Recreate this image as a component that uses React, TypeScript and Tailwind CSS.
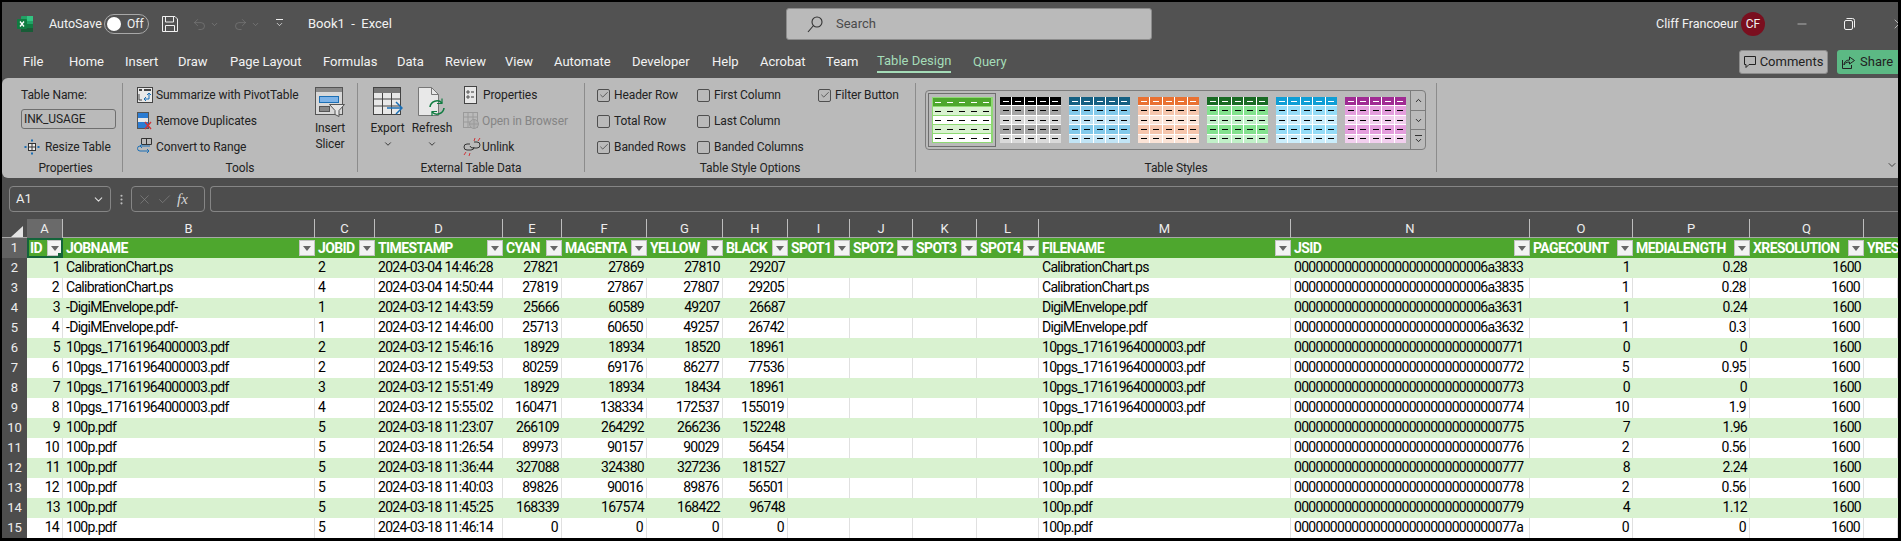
import { ChevronDown, ChevronUp, Minus, X, Check, MoreVertical, Undo2, Redo2 } from "lucide-react";

const gridCols =
  "grid grid-cols-[25px_36px_252px_60px_128px_59px_85px_76px_65px_62px_63px_64px_62px_252px_239px_103px_117px_114px_34px]";

const tabs = [
  { label: "File", cls: "w-[46px]" },
  { label: "Home", cls: "w-[56px]" },
  { label: "Insert", cls: "w-[53px]" },
  { label: "Draw", cls: "w-[52px]" },
  { label: "Page Layout", cls: "w-[93px]" },
  { label: "Formulas", cls: "w-[74px]" },
  { label: "Data", cls: "w-[48px]" },
  { label: "Review", cls: "w-[60px]" },
  { label: "View", cls: "w-[49px]" },
  { label: "Automate", cls: "w-[78px]" },
  { label: "Developer", cls: "w-[80px]" },
  { label: "Help", cls: "w-[48px]" },
  { label: "Acrobat", cls: "w-[66px]" },
  { label: "Team", cls: "w-[51px]" },
];

const headers = [
  "ID", "JOBNAME", "JOBID", "TIMESTAMP", "CYAN", "MAGENTA", "YELLOW", "BLACK", "SPOT1", "SPOT2", "SPOT3", "SPOT4",
  "FILENAME", "JSID", "PAGECOUNT", "MEDIALENGTH", "XRESOLUTION", "YRES",
];
const colLetters = "ABCDEFGHIJKLMNOPQR".split("");

const jsid = (tail: string) => tail.padStart(32, "0");
const calib = "CalibrationChart.ps";
const digi = "-DigiMEnvelope.pdf-";
const digiFile = "DigiMEnvelope.pdf";
const pgs = "10pgs_17161964000003.pdf";
const hundred = "100p.pdf";

const rows: (string | number)[][] = [
  [1, calib, 2, "2024-03-04 14:46:28", 27821, 27869, 27810, 29207, calib, "6a3833", 1, 0.28],
  [2, calib, 4, "2024-03-04 14:50:44", 27819, 27867, 27807, 29205, calib, "6a3835", 1, 0.28],
  [3, digi, 1, "2024-03-12 14:43:59", 25666, 60589, 49207, 26687, digiFile, "6a3631", 1, 0.24],
  [4, digi, 1, "2024-03-12 14:46:00", 25713, 60650, 49257, 26742, digiFile, "6a3632", 1, 0.3],
  [5, pgs, 2, "2024-03-12 15:46:16", 18929, 18934, 18520, 18961, pgs, "771", 0, 0],
  [6, pgs, 2, "2024-03-12 15:49:53", 80259, 69176, 86277, 77536, pgs, "772", 5, 0.95],
  [7, pgs, 3, "2024-03-12 15:51:49", 18929, 18934, 18434, 18961, pgs, "773", 0, 0],
  [8, pgs, 4, "2024-03-12 15:55:02", 160471, 138334, 172537, 155019, pgs, "774", 10, 1.9],
  [9, hundred, 5, "2024-03-18 11:23:07", 266109, 264292, 266236, 152248, hundred, "775", 7, 1.96],
  [10, hundred, 5, "2024-03-18 11:26:54", 89973, 90157, 90029, 56454, hundred, "776", 2, 0.56],
  [11, hundred, 5, "2024-03-18 11:36:44", 327088, 324380, 327236, 181527, hundred, "777", 8, 2.24],
  [12, hundred, 5, "2024-03-18 11:40:03", 89826, 90016, 89876, 56501, hundred, "778", 2, 0.56],
  [13, hundred, 5, "2024-03-18 11:45:25", 168339, 167574, 168422, 96748, hundred, "779", 4, 1.12],
  [14, hundred, 5, "2024-03-18 11:46:14", 0, 0, 0, 0, hundred, "77a", 0, 0],
];

const tableStyles = [
  { head: "bg-[#4ea72e]", band: "bg-[#d9f2d0]", alt: "bg-white", selected: true },
  { head: "bg-black", band: "bg-[#a6a6a6]", alt: "bg-[#d9d9d9]", selected: false },
  { head: "bg-[#156082]", band: "bg-[#83caeb]", alt: "bg-[#c1e4f5]", selected: false },
  { head: "bg-[#e97132]", band: "bg-[#f6c6ad]", alt: "bg-[#fbe3d6]", selected: false },
  { head: "bg-[#196b24]", band: "bg-[#83e28e]", alt: "bg-[#c1f0c8]", selected: false },
  { head: "bg-[#0f9ed5]", band: "bg-[#95dcf7]", alt: "bg-[#caedfb]", selected: false },
  { head: "bg-[#a02b93]", band: "bg-[#e49edd]", alt: "bg-[#f2cfee]", selected: false },
];

function ExcelLogo() {
  return (
    <svg width="16" height="16" viewBox="0 0 16 16">
      <rect x="4" y="0" width="12" height="16" rx="1" fill="#21a366" />
      <rect x="10" y="0" width="6" height="5" fill="#33c481" />
      <rect x="10" y="8" width="6" height="4" fill="#107c41" />
      <rect x="4" y="12" width="12" height="4" fill="#185c37" />
      <rect x="0" y="3" width="10" height="10" rx="1" fill="#107c41" />
      <path d="M3 5.5l4 5M7 5.5l-4 5" stroke="#fff" strokeWidth="1.3" />
    </svg>
  );
}

function SaveIcon() {
  return (
    <svg width="16" height="16" viewBox="0 0 16 16" fill="none" stroke="#f0f0f0" strokeWidth="1">
      <path d="M.5.5h12.5l2.5 2.5v12.5H.5z" />
      <path d="M3.5.5v5.5h8V.5M3.5 15.5v-6h9v6" />
    </svg>
  );
}

function SearchGlass() {
  return (
    <svg width="16" height="17" viewBox="0 0 16 17" fill="none" stroke="#333" strokeWidth="1.1">
      <circle cx="10" cy="6" r="5" />
      <path d="M6.500 9.500L1 16" />
    </svg>
  );
}

function RestoreIcon() {
  return (
    <svg width="11" height="12" viewBox="0 0 11 12" fill="none" stroke="#f0f0f0">
      <rect x=".5" y="2.500" width="8" height="9" rx="1.500" />
      <path d="M2.500.5h6a2 2 0 012 2v7" />
    </svg>
  );
}

function PivotIcon() {
  return (
    <svg width="16" height="16" viewBox="0 0 16 16" fill="none">
      <rect x=".5" y=".5" width="15" height="15" fill="#e8e8e8" stroke="#444" />
      <path d="M2 3h3M7 3h7" stroke="#444" strokeWidth="2" />
      <path d="M2 7v6M2 13h3" stroke="#444" />
      <path d="M12 6v6H7m2-2l-2 2 2 2M10 8l2-2 2 2" stroke="#1b6fb5" />
    </svg>
  );
}

function DuplicatesIcon() {
  return (
    <svg width="16" height="18" viewBox="0 0 16 18" fill="none">
      <rect x=".5" y=".5" width="11" height="16" fill="#e8e8e8" stroke="#555" />
      <rect x="1" y="1" width="10" height="5" fill="#2b7cd3" />
      <rect x="1" y="10" width="10" height="6" fill="#2b7cd3" />
      <path d="M8 10l6 7M14 10l-6 7" stroke="#d13438" strokeWidth="1.4" />
    </svg>
  );
}

function ConvertIcon() {
  return (
    <svg width="16" height="18" viewBox="0 0 16 18" fill="none">
      <path d="M4.5.5h10v6h-10zM9.5.5v6" stroke="#333" />
      <path d="M13 8H3a2.5 2.5 0 000 5h9m-2-2l2 2-2 2M5 6L3 8l2 2" stroke="#1b6fb5" />
    </svg>
  );
}

function ResizeIcon() {
  return (
    <svg width="16" height="16" viewBox="0 0 16 16" fill="none">
      <rect x="4.5" y="4.5" width="7" height="7" fill="#eee" stroke="#333" />
      <path d="M4.5 8h7M8 4.5v7" stroke="#333" />
      <path d="M8 0v3M7 1.5h2M8 13v3M7 14.500h2M0 8h3M1.500 7v2M13 8h3M14.500 7v2" stroke="#1b6fb5" />
    </svg>
  );
}

function SlicerIcon() {
  return (
    <svg width="30" height="30" viewBox="0 0 30 30" fill="none">
      <rect x=".5" y=".5" width="27" height="27" fill="#d8d8d8" stroke="#555" />
      <rect x="1" y="1" width="26" height="4" fill="#8a8a8a" />
      <rect x="4.500" y="9.500" width="19" height="6" fill="#7db3e8" stroke="#1b6fb5" />
      <rect x="4.500" y="19.500" width="10" height="5" fill="#888" stroke="#555" />
      <path d="M14.500 17.500h15l-5.500 6v6l-4-2v-4z" fill="#e4e4e4" stroke="#555" />
    </svg>
  );
}

function ExportIcon() {
  return (
    <svg width="30" height="30" viewBox="0 0 30 30" fill="none">
      <rect x=".5" y=".5" width="27" height="27" fill="#e8e8e8" stroke="#444" />
      <rect x="1" y="1" width="26" height="5" fill="#777" />
      <path d="M1 12h26M1 19h26M9.500 6v21M18.500 6v21" stroke="#444" />
      <path d="M14 21h15m-6-6l6 6-6 6" stroke="#1b6fb5" strokeWidth="1.500" />
    </svg>
  );
}

function RefreshIcon() {
  return (
    <svg width="28" height="30" viewBox="0 0 28 30" fill="none">
      <path d="M.5.5h13l7 7v21H.500z" fill="#e8e8e8" stroke="#777" />
      <path d="M13.500.5v7h7" stroke="#777" />
      <path d="M12 20a7 7 0 0112-4M26 21a7 7 0 01-12 4" stroke="#107c41" strokeWidth="1.600" />
      <path d="M24 11.500v5h-5M14 29v-4.500h5" stroke="#107c41" strokeWidth="1.200" />
    </svg>
  );
}

function DocDotsIcon() {
  return (
    <svg width="13" height="18" viewBox="0 0 13 18" fill="none">
      <rect x=".5" y=".5" width="12" height="17" fill="#e8e8e8" stroke="#444" />
      <path d="M3 5h2v2H3zM3 10h2v2H3z" stroke="#333" strokeWidth=".8" />
      <path d="M7 6h3M7 11h3" stroke="#333" />
    </svg>
  );
}

function BrowserIcon() {
  return (
    <svg width="16" height="18" viewBox="0 0 16 18" fill="none" stroke="#9a9a9a">
      <rect x=".5" y=".5" width="14" height="15" />
      <path d="M.5 5h14M.5 10h14M5 .5v15M10 .5v15" />
      <circle cx="11" cy="12" r="4.500" fill="#b0b0b0" />
      <path d="M6.500 12h9M11 7.500v9" />
    </svg>
  );
}

function UnlinkIcon() {
  return (
    <svg width="18" height="20" viewBox="0 0 18 20" fill="none">
      <path d="M7 7H4a3 3 0 000 6h4a3 3 0 003-3M11 5h3a3 3 0 010 6h-4a3 3 0 01-3-2" stroke="#333" />
      <path d="M11 4l1-3M15 4l2-3M3 15l-2 3M7 16l-1 3" stroke="#d13438" />
    </svg>
  );
}

function FilterButton() {
  return (
    <span className="flex h-[16px] w-[16px] shrink-0 items-center justify-center border border-[#c4c4c4] bg-[#f3f3f3]">
      <svg width="8" height="5" viewBox="0 0 8 5">
        <path d="M0 0h8L4 5z" fill="#666" />
      </svg>
    </span>
  );
}

function CheckBox({ checked = false }: { checked?: boolean }) {
  return (
    <span className="flex h-[13px] w-[13px] shrink-0 items-center justify-center rounded-[2px] border border-[#4f4f4f]">
      {checked && <Check size={10} strokeWidth={1.5} className="text-[#222]" />}
    </span>
  );
}

function OptionRow({ label, checked }: { label: string; checked?: boolean }) {
  return (
    <div className="flex h-6 items-center gap-[4px]">
      <CheckBox checked={checked} />
      <span>{label}</span>
    </div>
  );
}

function StyleThumb({ s }: { s: (typeof tableStyles)[number] }) {
  const rowsCls = [s.head, s.band, s.alt, s.band, s.alt];
  const thumb = (
    <div className={`flex h-[46px] w-[61px] shrink-0 flex-col gap-[1px] ${s.selected ? "border border-[#8ed973] bg-[#8ed973]" : "bg-white"}`}>
      {rowsCls.map((bg, i) => (
        <div key={i} className={`flex flex-1 ${s.selected ? "gap-0" : "gap-[1px]"}`}>
          {[0, 1, 2, 3, 4].map((c) => (
            <div key={c} className={`flex flex-1 items-center justify-center ${bg}`}>
              <span className={`h-[1px] w-[6px] ${i === 0 ? "bg-white" : "bg-black"}`} />
            </div>
          ))}
        </div>
      ))}
    </div>
  );
  if (s.selected) {
    return <div className="flex h-[54px] w-[68px] shrink-0 items-center justify-center border border-[#6e6e6e]">{thumb}</div>;
  }
  return <div className="flex h-[54px] w-[69px] shrink-0 items-center pl-[4px]">{thumb}</div>;
}

function GroupLabel({ children }: { children: string }) {
  return <div className="mt-[2px] h-[14px] text-center leading-[14px] text-[#222]">{children}</div>;
}

function Ribbon() {
  return (
    <div className="flex h-[100px] rounded-l-[6px] bg-[#bababa] pt-[5px] pl-[7px] font-['Roboto',sans-serif] text-[12px] tracking-[-0.1px] text-[#222]">
      <div className="h-[89px] w-[114px] border-r border-[#8c8c8c]">
        <div className="flex h-[76px] flex-col pl-[12px]">
          <div className="flex h-6 items-center">Table Name:</div>
          <div className="mt-[2px] flex h-[20px] w-[95px] items-center rounded-[3px] border border-[#6f6f6f] pl-[2px]">INK_USAGE</div>
          <div className="mt-[7px] flex h-6 items-center gap-[5px] pl-[3px]">
            <ResizeIcon />
            <span>Resize Table</span>
          </div>
        </div>
        <GroupLabel>Properties</GroupLabel>
      </div>

      <div className="h-[89px] w-[235px] border-r border-[#8c8c8c]">
        <div className="flex h-[76px] pl-[14px]">
          <div className="flex w-[171px] flex-col gap-[2px]">
            <div className="flex h-6 items-center gap-[3px]"><PivotIcon /><span>Summarize with PivotTable</span></div>
            <div className="flex h-6 items-center gap-[3px]"><DuplicatesIcon /><span>Remove Duplicates</span></div>
            <div className="flex h-6 items-center gap-[3px]"><ConvertIcon /><span>Convert to Range</span></div>
          </div>
          <div className="flex w-[44px] flex-col items-center pt-[4px] text-center leading-[16px]">
            <SlicerIcon />
            <span className="mt-[3px]">Insert</span>
            <span>Slicer</span>
          </div>
        </div>
        <GroupLabel>Tools</GroupLabel>
      </div>

      <div className="h-[89px] w-[227px] border-r border-[#8c8c8c]">
        <div className="flex h-[76px] pl-[5px]">
          <div className="flex w-[49px] flex-col items-center pt-[4px] leading-[16px]">
            <ExportIcon />
            <span className="mt-[3px]">Export</span>
            <ChevronDown size={10} className="mt-[3px]" />
          </div>
          <div className="flex w-[40px] flex-col items-center pt-[4px] leading-[16px]">
            <RefreshIcon />
            <span className="mt-[3px]">Refresh</span>
            <ChevronDown size={10} className="mt-[3px]" />
          </div>
          <div className="flex flex-col gap-[2px] pl-[11px]">
            <div className="flex h-6 items-center gap-[6px] pl-[1px]"><DocDotsIcon /><span>Properties</span></div>
            <div className="flex h-6 items-center gap-[3px] text-[#858585]"><BrowserIcon /><span>Open in Browser</span></div>
            <div className="flex h-6 items-center gap-[1px]"><UnlinkIcon /><span>Unlink</span></div>
          </div>
        </div>
        <GroupLabel>External Table Data</GroupLabel>
      </div>

      <div className="h-[89px] w-[331px] border-r border-[#8c8c8c]">
        <div className="flex h-[76px] pl-[12px]">
          <div className="flex w-[100px] flex-col gap-[2px]">
            <OptionRow label="Header Row" checked />
            <OptionRow label="Total Row" />
            <OptionRow label="Banded Rows" checked />
          </div>
          <div className="flex w-[121px] flex-col gap-[2px]">
            <OptionRow label="First Column" />
            <OptionRow label="Last Column" />
            <OptionRow label="Banded Columns" />
          </div>
          <div className="flex flex-col">
            <OptionRow label="Filter Button" checked />
          </div>
        </div>
        <GroupLabel>Table Style Options</GroupLabel>
      </div>

      <div className="h-[89px] w-[521px] border-r border-[#8c8c8c]">
        <div className="h-[76px] pt-[7px] pl-[9px]">
          <div className="flex h-[60px] w-[501px] rounded-[4px] border border-[#7c7c7c]">
            <div className="flex flex-1 items-center pl-[2px]">
              {tableStyles.map((s) => (
                <StyleThumb key={s.head} s={s} />
              ))}
            </div>
            <div className="flex w-[15px] flex-col border-l border-[#7c7c7c]">
              <div className="flex flex-1 items-center justify-center border-b border-[#7c7c7c]"><ChevronUp size={9} strokeWidth={2.5} /></div>
              <div className="flex flex-1 items-center justify-center border-b border-[#7c7c7c]"><ChevronDown size={9} strokeWidth={2.5} /></div>
              <div className="flex flex-1 flex-col items-center justify-center">
                <span className="h-[1px] w-[7px] bg-[#333]" />
                <ChevronDown size={9} strokeWidth={2.5} />
              </div>
            </div>
          </div>
        </div>
        <GroupLabel>Table Styles</GroupLabel>
      </div>

      <div className="flex flex-1 items-end justify-end pb-[7px]">
        <ChevronDown size={12} className="text-[#444]" />
      </div>
    </div>
  );
}

function FormulaBar() {
  return (
    <div className="mt-[8px] flex h-[26px] items-stretch pl-[7px] font-['Roboto',sans-serif] text-[13px] text-[#eee]">
      <div className="flex w-[102px] items-center justify-between rounded-[4px] border border-[#858585] pr-[5px] pl-[6px]">
        <span>A1</span>
        <ChevronDown size={13} className="text-[#ddd]" />
      </div>
      <div className="flex w-[20px] items-center justify-center">
        <MoreVertical size={13} className="text-[#bbb]" />
      </div>
      <div className="flex w-[74px] items-center gap-[5px] rounded-[4px] border border-[#858585] pl-[5px]">
        <X size={15} strokeWidth={1} className="text-[#8a8a8a]" />
        <Check size={15} strokeWidth={1} className="text-[#8a8a8a]" />
        <span className="font-['Liberation_Serif',serif] text-[15px] text-[#d5d5d5] italic">fx</span>
      </div>
      <div className="ml-[5px] flex-1 rounded-l-[4px] border-y border-l border-[#858585]" />
    </div>
  );
}

function SheetTable() {
  return (
    <div className="mt-[7px] font-['Roboto',sans-serif] text-[14px] tracking-[-0.7px]">
      <div className={`${gridCols} h-[19px] border-b border-[#a8a8a8] text-[13px] tracking-normal text-[#eee]`}>
        <div className="flex items-end justify-end pr-[4px] pb-[2px]">
          <svg width="12" height="11" viewBox="0 0 12 11">
            <path d="M12 0v11H0z" fill="#e4e4e4" />
          </svg>
        </div>
        {colLetters.map((c, i) => (
          <div
            key={c}
            className={`flex items-center justify-center border-r border-[#bdbdbd] ${i === 0 ? "bg-[#6a6a6a]" : ""} ${i === 17 ? "border-r-0" : ""}`}
          >
            {i === 17 ? "" : c}
          </div>
        ))}
      </div>

      <div className={`${gridCols} h-[20px]`}>
        <div className="flex items-center justify-center bg-[#626262] text-[13px] tracking-normal text-[#eee]">1</div>
        {headers.map((h, i) => (
          <div key={h} className="relative flex items-center overflow-hidden bg-[#4ea72e] pl-[3px] text-[14px] font-bold tracking-[-0.6px] text-white">
            <span className="flex-1 whitespace-nowrap">{h}</span>
            {i !== 17 && <FilterButton />}
            {i === 0 && (
              <>
                <span className="absolute inset-0 border-2 border-[#14643a]" />
                <span className="absolute right-0 bottom-0 h-[5px] w-[5px] bg-[#14643a]" />
              </>
            )}
          </div>
        ))}
      </div>

      {rows.map((r, idx) => {
        const green = idx % 2 === 0;
        const cellBase = `flex items-center overflow-hidden whitespace-nowrap border-b border-[#8ed973] text-black ${
          green ? "bg-[#d9f2d0]" : "border-r-[#e0e0e0] border-r bg-white"
        }`;
        const left = `${cellBase} pl-[3px]`;
        const right = `${cellBase} justify-end pr-[3px]`;
        return (
          <div key={idx} className={`${gridCols} h-[20px]`}>
            <div className="flex items-center justify-center border-b border-[#2f2f2f] bg-[#4d4d4d] text-[13px] tracking-normal text-[#eee]">{idx + 2}</div>
            <div className={right}>{r[0]}</div>
            <div className={left}>{r[1]}</div>
            <div className={left}>{r[2]}</div>
            <div className={left}>{r[3]}</div>
            <div className={right}>{r[4]}</div>
            <div className={right}>{r[5]}</div>
            <div className={right}>{r[6]}</div>
            <div className={right}>{r[7]}</div>
            <div className={cellBase} />
            <div className={cellBase} />
            <div className={cellBase} />
            <div className={cellBase} />
            <div className={left}>{r[8]}</div>
            <div className={left}>{jsid(String(r[9]))}</div>
            <div className={right}>{r[10]}</div>
            <div className={right}>{r[11]}</div>
            <div className={right}>1600</div>
            <div className={cellBase} />
          </div>
        );
      })}
    </div>
  );
}

export default function App() {
  return (
    <div className="h-[541px] w-[1901px] overflow-hidden bg-black pt-[2px] pr-[3px] pb-[3px] pl-[2px]">
      <div className="h-[536px] overflow-hidden bg-[#4d4d4d]">
        <div className="bg-[#525252] font-['Roboto',sans-serif] text-[13px] text-[#f2f2f2]">
          <div className="flex h-[44px] items-center">
            <div className="flex w-[784px] shrink-0 items-center pl-[15px]">
              <ExcelLogo />
              <span className="ml-[16px] w-[48px] text-[12.500px] whitespace-nowrap">AutoSave</span>
              <div className="ml-[7px] flex h-[20px] w-[45px] items-center rounded-full border border-[#a8a8a8] pl-[2px]">
                <span className="h-[14px] w-[14px] rounded-full bg-white" />
                <span className="ml-[6px] text-[12px]">Off</span>
              </div>
              <span className="ml-[13px]"><SaveIcon /></span>
              <Undo2 size={15} strokeWidth={1} className="ml-[14px] text-[#7d7d7d]" />
              <ChevronDown size={9} className="ml-[3px] text-[#7d7d7d]" />
              <Redo2 size={15} strokeWidth={1} className="ml-[14px] text-[#7d7d7d]" />
              <ChevronDown size={9} className="ml-[3px] text-[#7d7d7d]" />
              <span className="ml-[15px] flex flex-col items-center">
                <span className="h-[1px] w-[7px] bg-[#eee]" />
                <ChevronDown size={9} className="text-[#eee]" />
              </span>
              <span className="ml-[24px]">Book1&nbsp; -&nbsp; Excel</span>
            </div>
            <div className="flex h-[32px] w-[366px] shrink-0 items-center rounded-[3px] border border-[#8c8c8c] bg-[#bababa] pl-[20px] text-[#4a4a4a]">
              <SearchGlass />
              <span className="ml-[13px]">Search</span>
            </div>
            <div className="flex min-w-0 flex-1 items-center pl-[504px]">
              <span className="w-[76px] shrink-0 text-[12.500px] whitespace-nowrap">Cliff Francoeur</span>
              <span className="ml-[9px] flex h-[24px] w-[24px] shrink-0 items-center justify-center rounded-full bg-[#7a0f1f] text-[12px]">CF</span>
              <Minus size={14} strokeWidth={1} className="ml-[30px] shrink-0" />
              <span className="ml-[35px] shrink-0"><RestoreIcon /></span>
              <X size={16} strokeWidth={1} className="ml-[36px] shrink-0" />
            </div>
          </div>
          <div className="flex h-[32px] items-center pl-[21px]">
            {tabs.map((t) => (
              <span key={t.label} className={`${t.cls} shrink-0`}>{t.label}</span>
            ))}
            <span className="w-[96px] shrink-0">
              <span className="inline-block border-b-2 border-[#a5dcb8] text-[#a5dcb8]">Table Design</span>
            </span>
            <span className="w-[766px] shrink-0 text-[#a5dcb8]">Query</span>
            <div className="flex h-[24px] w-[89px] shrink-0 items-center justify-center gap-[4px] rounded-[3px] border border-[#8c8c8c] bg-[#b5b5b5] text-[#222]">
              <svg width="12" height="12" viewBox="0 0 12 12" fill="none" stroke="#222">
                <path d="M.5.5h11v8H5l-3 3v-3H.500z" />
              </svg>
              <span>Comments</span>
            </div>
            <div className="ml-[9px] flex h-[24px] flex-1 items-center gap-[5px] rounded-l-[3px] bg-[#5cb984] pl-[5px] text-[#222]">
              <svg width="13" height="13" viewBox="0 0 13 13" fill="none" stroke="#222">
                <path d="M7.500 1l5 3.500-5 3.500V6C4 6 2.500 7.500 2 9c0-3 2-5 5.500-5zM.5 4v8.500h9V9" />
              </svg>
              <span>Share</span>
            </div>
          </div>
        </div>
        <Ribbon />
        <FormulaBar />
        <SheetTable />
      </div>
    </div>
  );
}
